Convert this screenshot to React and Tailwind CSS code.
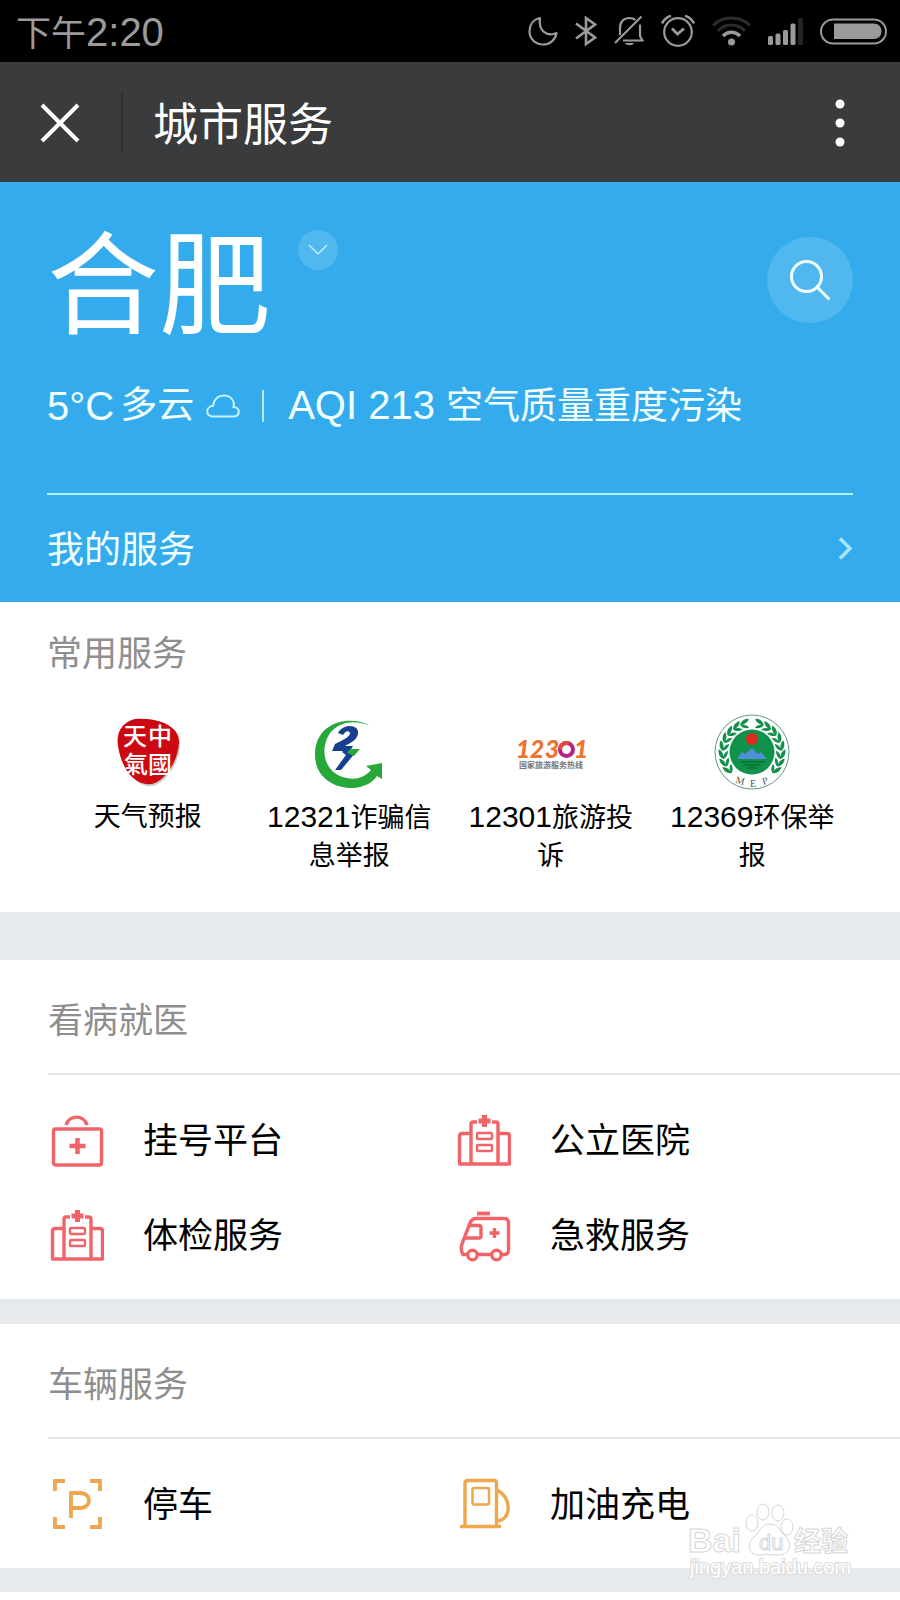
function MoonIcon() {
  return (
    <svg className="w-[30px] h-8" viewBox="0 0 30 32" fill="none" stroke="currentColor" strokeWidth="2.200" strokeLinejoin="round">
      <path d="M12 3 C5 4.500 1.500 10 1.500 16 C1.500 24 7.500 29.500 15 29.500 C22 29.500 27.500 25 28.500 18 C19 22 10 16 12 3 Z" />
    </svg>
  )
}

function BluetoothIcon() {
  return (
    <svg className="w-[22px] h-8" viewBox="0 0 22 32" fill="none" stroke="currentColor" strokeWidth="2.600">
      <path d="M1 8.500 L20 22.500 L11 29 V3 L20 9.500 L1 23.500" />
    </svg>
  )
}

function MutedBellIcon() {
  return (
    <svg className="w-[30px] h-8" viewBox="0 0 30 32" fill="none" stroke="currentColor" strokeWidth="2.200">
      <path d="M6 20 V13 C6 6.500 10 3 15.500 3 C18 3 20 3.800 21.500 5" />
      <path d="M26 9.500 V21 L28.500 25.500 H9" />
      <path d="M1 28 L27.500 1.500" />
      <path d="M11 28 H20 C19 31 12 31 11 28 Z" fill="currentColor" stroke="none" />
    </svg>
  )
}

function AlarmIcon() {
  return (
    <svg className="w-[34px] h-8" viewBox="0 0 34 32" fill="none" stroke="currentColor" strokeWidth="2.200">
      <circle cx="17" cy="17" r="13.800" />
      <path d="M11 13.500 L16.500 19 L23 13.500" strokeWidth="2.800" />
      <path d="M1 8.500 C3 4.500 6 2 10 .8 M33 8.500 C31 4.500 28 2 24 .8" strokeWidth="2.600" />
    </svg>
  )
}

function WifiIcon() {
  return (
    <svg className="w-[39px] h-8" viewBox="0 0 39 32" fill="none" strokeWidth="3">
      <path d="M1 10.500 C11 .5 28 .5 38 10.500" stroke="#2c2c2c" />
      <path d="M6 16 C13.500 8 25.500 8 33 16" stroke="#2c2c2c" />
      <path d="M11 21 C16 16 23 16 28 21" stroke="currentColor" strokeWidth="3.500" />
      <circle cx="19.500" cy="27" r="3.500" fill="currentColor" />
    </svg>
  )
}

function SignalIcon() {
  return (
    <svg className="w-[35px] h-8" viewBox="0 0 35 32" fill="currentColor">
      <rect x="0" y="21" width="5" height="9" rx="1.500" />
      <rect x="7.500" y="18.500" width="5" height="11.500" rx="1.500" />
      <rect x="15" y="15" width="5" height="15" rx="1.500" />
      <rect x="22.500" y="8.500" width="5" height="21.500" rx="1.500" />
      <rect x="30" y="3" width="5" height="27" rx="1.500" fill="#242424" />
    </svg>
  )
}

function BatteryIcon() {
  return (
    <svg className="w-[67px] h-8" viewBox="0 0 67 32" fill="none">
      <rect x="1" y="4.500" width="65" height="24" rx="12" stroke="currentColor" strokeWidth="2" />
      <path d="M14 8.500 H54 C64 8.500 64 24 54 24 H14 Z" fill="currentColor" />
    </svg>
  )
}

function StatusBar() {
  return (
    <div className="flex h-[62px] items-center justify-between bg-black pl-4 pr-[13px] text-[#9b9b9b]">
      <span className="pt-1 text-[35px] leading-[48px]">
        下午<span className="text-[40px]">2:20</span>
      </span>
      <div className="flex items-center gap-[17px]">
        <MoonIcon />
        <BluetoothIcon />
        <MutedBellIcon />
        <AlarmIcon />
        <WifiIcon />
        <SignalIcon />
        <BatteryIcon />
      </div>
    </div>
  )
}

function NavBar() {
  return (
    <header className="flex h-[120px] items-center bg-[#393b3d] text-white">
      <button type="button" aria-label="关闭" className="flex h-full w-[121px] items-center pl-10 pt-0.5">
        <svg className="w-10 h-10" viewBox="0 0 40 40" fill="none" stroke="currentColor" strokeWidth="4">
          <path d="M2 2 L38 38 M38 2 L2 38" />
        </svg>
      </button>
      <div className="h-[60px] w-0.5 bg-[#2e3032]"></div>
      <h1 className="pl-[30px] pt-2 text-[45px] leading-[60px]">城市服务</h1>
      <button type="button" aria-label="更多" className="ml-auto flex h-full w-[120px] items-center justify-center pt-0.5">
        <svg className="w-3 h-12" viewBox="0 0 12 48" fill="currentColor">
          <circle cx="6" cy="5" r="4.500" />
          <circle cx="6" cy="24" r="4.500" />
          <circle cx="6" cy="43" r="4.500" />
        </svg>
      </button>
    </header>
  )
}

function CityPanel() {
  return (
    <section className="bg-[#33abed] px-[47px] text-[#f2ffff]">
      <div className="flex items-start pt-[42px]">
        <h2 className="pt-1 text-[112px] leading-[120px] text-white">合肥</h2>
        <button type="button" aria-label="切换城市" className="ml-[27px] mt-1.5 flex h-10 w-10 items-center justify-center rounded-full bg-white/15">
          <svg className="w-5 h-3" viewBox="0 0 20 12" fill="none" stroke="#bfeeff" strokeWidth="1.500">
            <path d="M1 1 L10 10 L19 1" />
          </svg>
        </button>
        <button type="button" aria-label="搜索" className="ml-auto mt-[13px] flex h-[86px] w-[86px] items-center justify-center rounded-full bg-white/15">
          <svg className="w-10 h-10" viewBox="0 0 40 40" fill="none" stroke="currentColor" strokeWidth="3" strokeLinecap="round">
            <circle cx="16.500" cy="16.500" r="15" />
            <path d="M27 27 L38.500 38.500" />
          </svg>
        </button>
      </div>
      <div className="mt-[30px] flex h-14 items-center whitespace-nowrap text-[37px] leading-[56px]">
        <span className="text-[40px]">5°C</span>
        <span className="ml-1.5">多云</span>
        <svg className="ml-3 w-[34px] h-6" viewBox="0 0 34 24" fill="none" stroke="#c5f4ff" strokeWidth="2">
          <path d="M7 22.500 C-1 22.500 -.5 12 7 12 C8 5 12 1.500 18 1.500 C25 1.500 29 7 27.500 13 C34.500 13 34.500 22.500 28 22.500 Z" />
        </svg>
        <span className="ml-[22px] h-8 w-0.5 bg-[#b5ebfb]"></span>
        <span className="ml-6">
          <span className="text-[40px]">AQI 213 </span>空气质量重度污染
        </span>
      </div>
      <div className="mt-[59px] border-t-2 border-[#b5f0fa]">
        <a href="#my" className="flex h-[107px] items-center justify-between text-[37px] leading-[48px]">
          <span className="pt-1">我的服务</span>
          <svg className="w-[15px] h-[23px]" viewBox="0 0 15 23" fill="none" stroke="#a9e6fb" strokeWidth="3.500">
            <path d="M2 1.500 L12 11.500 L2 21.500" />
          </svg>
        </a>
      </div>
    </section>
  )
}

function WeatherLogo() {
  return (
    <svg className="w-[74px] h-[74px]" viewBox="0 0 74 74">
      <path d="M9 33 C6 14 20 3 34 5 C52 5 70 14 69 30 C69 45 58 64 45 70 C30 76 14 60 9 33 Z" fill="#ccc" />
      <path d="M7 31 C4 12 18 2 32 4 C50 4 69 12 68 28 C67 44 57 62 44 68 C28 74 11 58 7 31 Z" fill="#cc0812" />
      <g fill="#fff" fontSize="24" fontWeight="500" textAnchor="middle">
        <text x="24" y="30">天</text>
        <text x="49" y="30">中</text>
        <text x="25" y="58">氣</text>
        <text x="49" y="58">國</text>
      </g>
    </svg>
  )
}

function FraudReportLogo() {
  return (
    <svg className="w-[74px] h-[74px]" viewBox="0 0 74 74">
      <path d="M57 10 C37 0 3 7 3 40 C3 62 22 74 42 73 C53 72 61 67 65 61 L70 64 V48 L54 51 L59 55 C52 63 43 65 35 63 C14 60 6 36 18 18 C28 6 42 5 57 10 Z" fill="#27a838" />
      <path d="M26 18 C31 8 48 9 46 19 C45 25 38 28 33 31 H41 L38 36 H20 L23 29 C31 25 38 22 38 18 C37 15 33 16 31 20 Z" fill="#173f91" />
      <path d="M34 33 L44 37 L29 55 H23 L34 40 L30 37 Z" fill="#173f91" />
      <path d="M38 34 L48 34 L42 41 L35 38 Z" fill="#27a838" />
    </svg>
  )
}

function TourismLogo() {
  return (
    <svg className="w-[74px] h-[74px]" viewBox="0 0 74 74" textAnchor="middle">
      <g fontFamily="Lato" fontSize="25" fontWeight="900" fontStyle="italic" fill="#ee7230">
        <text x="9" y="43">1</text>
        <text x="23" y="43">2</text>
        <text x="38" y="43">3</text>
        <text x="67" y="43">1</text>
      </g>
      <circle cx="52.500" cy="34.500" r="6.500" fill="none" stroke="#b5228a" strokeWidth="4" />
      <path d="M46 34.500 A6.500 6.500 0 0 1 55 28.500" fill="none" stroke="#e5473f" strokeWidth="4" />
      <text x="37" y="53" fontSize="8" fontWeight="700" fill="#777">国家旅游服务热线</text>
    </svg>
  )
}

const leafAngles = [14, 30, 46, 62, 78, 94, 110, 126]

function EnvironmentLogo() {
  return (
    <svg className="w-[76px] h-[76px]" viewBox="0 0 76 76">
      <circle cx="38" cy="38" r="37" fill="#fff" stroke="#5f9b83" />
      {leafAngles.map((angle) => (
        <g key={angle} fill="#15904c">
          <path transform={`rotate(${-angle} 38 38)`} d="M33 9 C35 5 39 4 43 5 C41 8 38 10 33 9 Z M33 9 C37 9 40 11 41 14 C37 14 34 12 33 9 Z" />
          <path transform={`rotate(${angle} 38 38)`} d="M43 9 C41 5 37 4 33 5 C35 8 38 10 43 9 Z M43 9 C39 9 36 11 35 14 C39 14 42 12 43 9 Z" />
        </g>
      ))}
      <circle cx="38" cy="38" r="22.500" fill="#11924a" />
      <circle cx="38" cy="25" r="6" fill="#db2a1e" />
      <path d="M23 45 L28 38 L31 40 L38 34 L44 40 L47 38 L53 45 Z" fill="#4f8ed8" />
      <path d="M26 48 H51 M29 51 H47 M33 54 H43" stroke="#0a7038" strokeWidth="1.500" />
      <g fontFamily="Liberation Serif" fontSize="10" fill="#555" textAnchor="middle">
        <text x="26" y="70" transform="rotate(16 26 67)">M</text>
        <text x="39" y="73">E</text>
        <text x="51" y="70" transform="rotate(-16 51 67)">P</text>
      </g>
    </svg>
  )
}

function FirstAidIcon() {
  return (
    <svg className="w-14 h-14 shrink-0" viewBox="0 0 56 56" fill="none" stroke="#f06468" strokeWidth="3.400">
      <rect x="5.500" y="16" width="48" height="36" rx="2" />
      <path d="M18 12 C21 1.500 36 1.500 39 12" />
      <path d="M29.500 25 V41 M21.500 33 H37.500" strokeWidth="4.500" />
    </svg>
  )
}

function HospitalIcon() {
  return (
    <svg className="w-14 h-14 shrink-0" viewBox="0 0 56 56" fill="none" stroke="#f06468" strokeWidth="3.400">
      <path d="M16 51 V11 Q16 9 18 9 H22 M37 9 H41 Q43 9 43 11 V51" />
      <path d="M16 20.500 H7 Q4.500 20.500 4.500 23 V51 H54.500 V23 Q54.500 20.500 52 20.500 H43" strokeLinejoin="round" />
      <rect x="22" y="20" width="15" height="6" rx="1" strokeWidth="2.400" />
      <rect x="22" y="32" width="15" height="6" rx="1" strokeWidth="2.400" />
      <path d="M29.500 2 V14 M23.500 8 H35.500" strokeWidth="5" />
    </svg>
  )
}

function AmbulanceIcon() {
  return (
    <svg className="w-14 h-14 shrink-0" viewBox="0 0 56 56" fill="none" stroke="#f06468" strokeWidth="3.400">
      <path d="M12 46.500 H8 Q5 41 7 36 L15 15 Q17 10.500 21 10.500 H49 Q53.500 10.500 53.500 15 V42 Q53.500 46.500 49 46.500 H47 M36 46.500 H23" />
      <path d="M14 17.500 H24 Q26 17.500 26 19.500 V28 Q26 30 24 30 H9.500" />
      <circle cx="17.500" cy="47" r="4.800" />
      <circle cx="41.500" cy="47" r="4.800" />
      <path d="M22 5.500 H35" strokeWidth="3.800" />
      <path d="M39.500 20 V30 M34.500 25 H44.500" />
    </svg>
  )
}

function ParkingIcon() {
  return (
    <svg className="w-14 h-14 shrink-0" viewBox="0 0 56 56" fill="none" stroke="#eda74c" strokeWidth="3.800">
      <path d="M7 14 V4 H17 M42 4 H52 V14 M52 40 V50 H42 M17 50 H7 V40" />
      <path d="M23 41 V16 H32 C44 16 44 31 32 31 H23" />
    </svg>
  )
}

function FuelIcon() {
  return (
    <svg className="w-14 h-14 shrink-0" viewBox="0 0 56 56" fill="none" stroke="#eda74c" strokeWidth="3.400">
      <path d="M10 49 V6 Q10 3.500 12.500 3.500 H39 Q41.500 3.500 41.500 6 V49" />
      <path d="M5 49.500 H46" />
      <rect x="17.500" y="11" width="16.500" height="16.500" rx="1.500" strokeWidth="2.500" />
      <path d="M42 13 C57 20 57 43 42 44" />
    </svg>
  )
}

const commonServices = [
  { code: "", name: "天气预报", Logo: WeatherLogo },
  { code: "12321", name: "诈骗信息举报", Logo: FraudReportLogo },
  { code: "12301", name: "旅游投诉", Logo: TourismLogo },
  { code: "12369", name: "环保举报", Logo: EnvironmentLogo },
]

const medicalServices = [
  { name: "挂号平台", Icon: FirstAidIcon },
  { name: "公立医院", Icon: HospitalIcon },
  { name: "体检服务", Icon: HospitalIcon },
  { name: "急救服务", Icon: AmbulanceIcon },
]

const vehicleServices = [
  { name: "停车", Icon: ParkingIcon },
  { name: "加油充电", Icon: FuelIcon },
]

function CommonServices() {
  return (
    <section className="bg-white px-[47px] pb-[37px] pt-7">
      <h2 className="text-[35px] leading-[48px] text-[#8e8e8e]">常用服务</h2>
      <div className="mt-9 grid grid-cols-4">
        {commonServices.map(({ code, name, Logo }) => (
          <a key={name} href="#service" className="flex flex-col items-center px-4 text-center text-[27px] leading-[38px] text-black">
            <div className="mb-2 flex h-[76px] items-center">
              <Logo />
            </div>
            <span>
              {code && <span className="text-[30px]">{code}</span>}
              {name}
            </span>
          </a>
        ))}
      </div>
    </section>
  )
}

function ServiceGroup({ title, services }) {
  return (
    <section className="bg-white pl-12">
      <h2 className="flex h-[115px] items-center border-b-2 border-[#e4e4e4] pt-2 text-[35px] leading-[48px] text-[#8e8e8e]">{title}</h2>
      <div className="grid grid-cols-2 pb-4 pr-[38px] pt-[18px]">
        {services.map(({ name, Icon }) => (
          <a key={name} href="#service" className="flex h-[95px] items-center gap-[39px] text-[35px] leading-[48px] text-black">
            <Icon />
            <span>{name}</span>
          </a>
        ))}
      </div>
    </section>
  )
}

function Watermark() {
  return (
    <svg className="pointer-events-none absolute bottom-2 right-[46px] h-[86px] w-[168px]" viewBox="0 0 168 86" fill="#fff" stroke="#d6d6d6" strokeWidth="1">
      <text x="2" y="54" fontFamily="Liberation Sans" fontSize="34" fontWeight="700">Bai</text>
      <ellipse cx="66" cy="25" rx="6" ry="8" />
      <ellipse cx="77" cy="14" rx="6" ry="8" />
      <ellipse cx="92" cy="15" rx="6" ry="8" />
      <ellipse cx="101" cy="29" rx="6" ry="8" />
      <path d="M84 26 C93 26 94 34 100 39 C107 46 103 57 94 57 C87 57 81 56 74 57 C63 58 60 47 67 40 C74 34 75 26 84 26 Z" />
      <text x="73" y="52" fontFamily="Liberation Sans" fontSize="22">du</text>
      <text x="108" y="53" fontSize="27" fontWeight="700">经验</text>
      <text x="4" y="76" fontFamily="Liberation Sans" fontSize="20" stroke="#dcdcdc" strokeWidth="2" paintOrder="stroke">jingyan.baidu.com</text>
    </svg>
  )
}

export default function App() {
  return (
    <div className="min-h-screen bg-white font-['Liberation_Sans','Noto_Sans_CJK_SC',sans-serif]">
      <StatusBar />
      <NavBar />
      <main className="relative">
        <CityPanel />
        <CommonServices />
        <div className="h-12 bg-[#e7eaed]"></div>
        <ServiceGroup title="看病就医" services={medicalServices} />
        <div className="h-[25px] bg-[#e7eaed]"></div>
        <ServiceGroup title="车辆服务" services={vehicleServices} />
        <div className="h-6 bg-[#e7eaed]"></div>
        <Watermark />
      </main>
    </div>
  )
}
